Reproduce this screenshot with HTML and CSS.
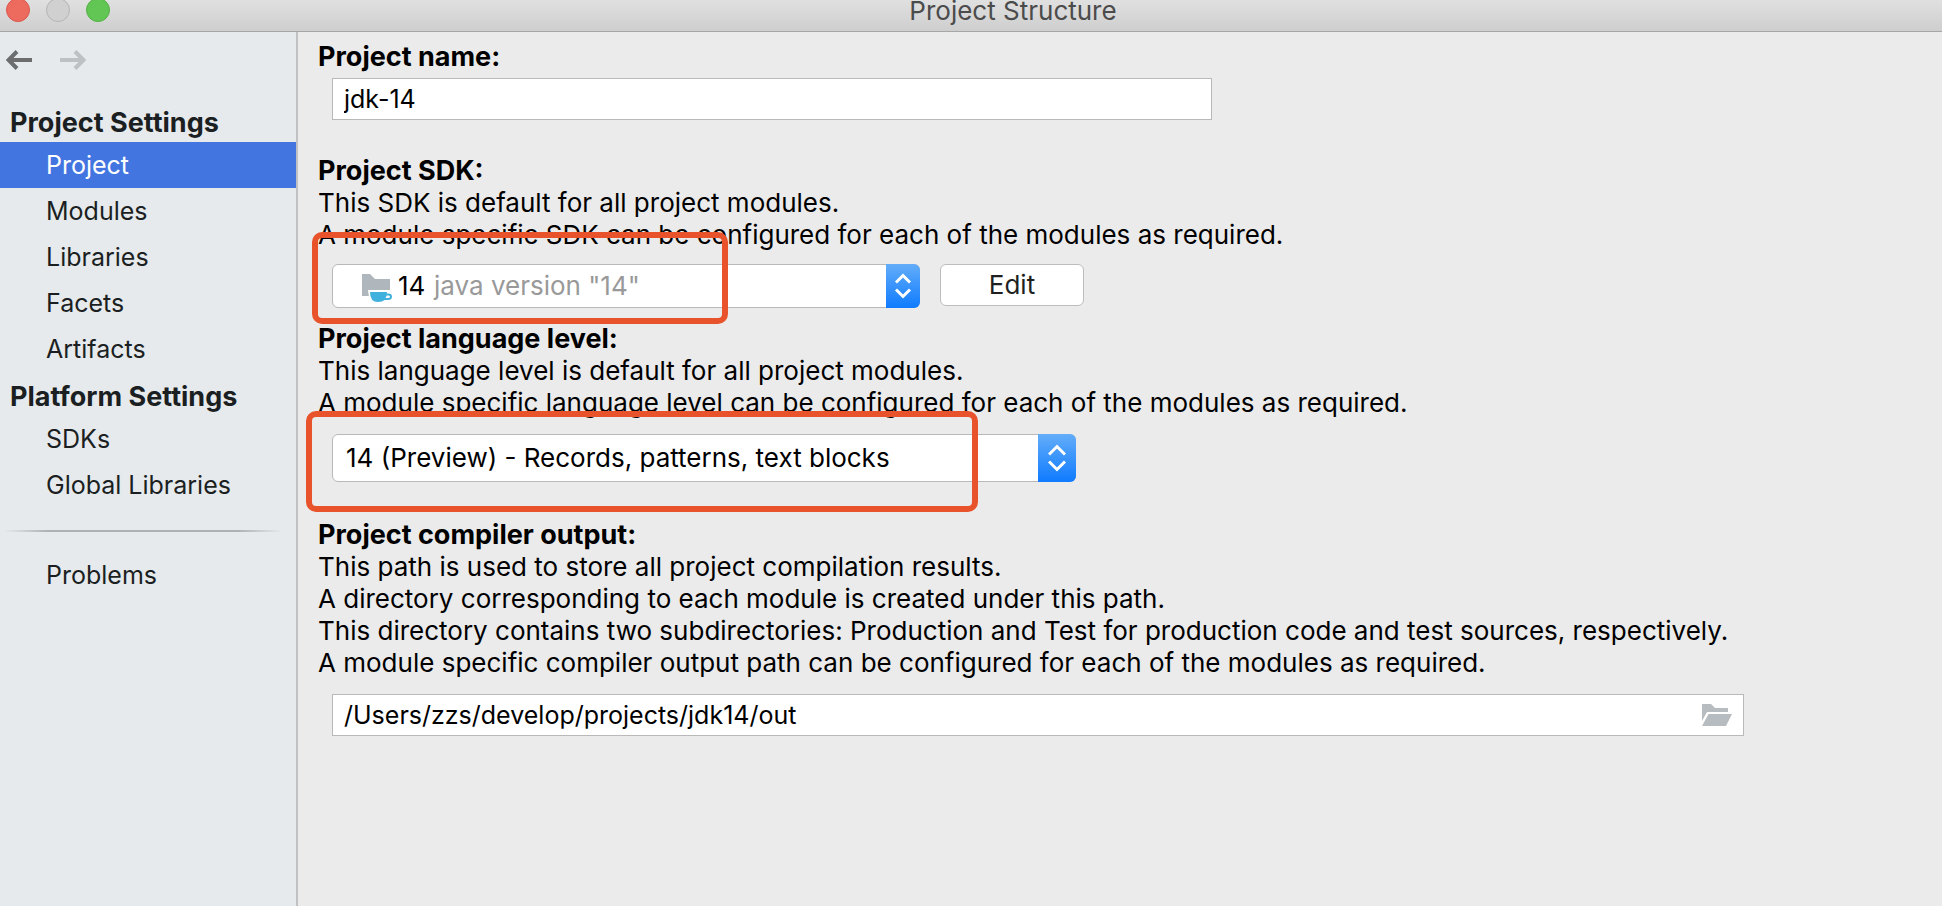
FILE: index.html
```html
<!DOCTYPE html>
<html lang="en">
<head>
    <meta charset="UTF-8">
    <meta name="viewport" content="width=device-width, initial-scale=1.0">
    <title>Project Structure</title>
    <link rel="stylesheet" href="styles.css">
</head>
<body>

    <header class="titlebar">
        <div class="lights">
            <button class="light close" aria-label="Close"></button>
            <button class="light minimize" aria-label="Minimize" disabled></button>
            <button class="light maximize" aria-label="Maximize"></button>
        </div>
        <h1>Project Structure</h1>
    </header>

    <div class="window">
        <aside class="sidebar">
            <div class="history">
                <button aria-label="Back">
                    <svg width="28" height="20" viewBox="0 0 28 20"><path d="M26 10H3M11 1.5L2.5 10L11 18.5" fill="none" stroke="#6b6d6f" stroke-width="4"/></svg>
                </button>
                <button aria-label="Forward" disabled>
                    <svg width="28" height="20" viewBox="0 0 28 20"><path d="M0 10H23M15 1.5L23.5 10L15 18.5" fill="none" stroke="#bec1c3" stroke-width="4"/></svg>
                </button>
            </div>
            <nav>
                <h2>Project Settings</h2>
                <a href="#" class="active">Project</a>
                <a href="#">Modules</a>
                <a href="#">Libraries</a>
                <a href="#">Facets</a>
                <a href="#">Artifacts</a>
                <h2>Platform Settings</h2>
                <a href="#">SDKs</a>
                <a href="#">Global Libraries</a>
                <hr>
                <a href="#">Problems</a>
            </nav>
        </aside>

        <main>
            <section class="name">
                <label for="projectName">Project name:</label>
                <div class="row">
                    <input type="text" id="projectName" value="jdk-14">
                </div>
            </section>

            <section class="sdk">
                <label for="projectSdk">Project SDK:</label>
                <p>This SDK is default for all project modules.</p>
                <p>A module specific SDK can be configured for each of the modules as required.</p>
                <div class="row">
                    <div class="combo sdk-combo">
                        <select id="projectSdk">
                            <option>14</option>
                        </select>
                        <svg class="sdk-icon" width="32" height="30" viewBox="0 0 32 30">
                            <path d="M0 0H8L13 5H28V22H0Z" fill="#afb7bc"/>
                            <path d="M6 16H28V23H7Z" fill="#fff"/>
                            <path d="M8 18H25Q25 28 16 28Q8 28 8 18Z" fill="#40b0dc"/>
                            <path d="M23 20.500H26Q29 20.500 29 22.500Q29 25 26 25H22" fill="none" stroke="#40b0dc" stroke-width="2"/>
                        </svg>
                        <span class="hint">java version "14"</span>
                        <span class="arrows">
                            <svg width="18" height="26" viewBox="0 0 18 26"><path d="M2 9.500L9 2.500L16 9.500M2 16.500L9 23.500L16 16.500"/></svg>
                        </span>
                    </div>
                    <button class="edit">Edit</button>
                </div>
                <div class="mark"></div>
            </section>

            <section class="level">
                <label for="languageLevel">Project language level:</label>
                <p>This language level is default for all project modules.</p>
                <p>A module specific language level can be configured for each of the modules as required.</p>
                <div class="row">
                    <div class="combo level-combo">
                        <select id="languageLevel">
                            <option>14 (Preview) - Records, patterns, text blocks</option>
                        </select>
                        <span class="arrows">
                            <svg width="18" height="28" viewBox="0 0 18 28"><path d="M1 10.500L9 2.500L17 10.500M1 17.500L9 25.500L17 17.500"/></svg>
                        </span>
                    </div>
                </div>
                <div class="mark"></div>
            </section>

            <section class="output">
                <label for="compilerOutput">Project compiler output:</label>
                <p>This path is used to store all project compilation results.</p>
                <p>A directory corresponding to each module is created under this path.</p>
                <p>This directory contains two subdirectories: Production and Test for production code and test sources, respectively.</p>
                <p>A module specific compiler output path can be configured for each of the modules as required.</p>
                <div class="row">
                    <div class="path">
                        <input type="text" id="compilerOutput" value="/Users/zzs/develop/projects/jdk14/out">
                        <button class="browse" aria-label="Browse">
                            <svg width="30" height="22" viewBox="0 0 30 22">
                                <path d="M0 0H9L13 4H26V8H5L0 17Z" fill="#b6bcc0"/>
                                <path d="M6.500 10H30L24 22H0Z" fill="#b6bcc0"/>
                            </svg>
                        </button>
                    </div>
                </div>
            </section>
        </main>
    </div>

</body>
</html>
```
FILE: styles.css
```css
* {
    box-sizing: border-box;
}

body {
    display: flex;
    flex-direction: column;
    min-height: 100vh;
    margin: 0;
    background-color: #ebebeb;
    color: #000000;
    font-family: Inter, "Liberation Sans", sans-serif;
    font-size: 26px;
    line-height: 32px;
}

button, input, select {
    margin: 0;
    padding: 0;
    border: none;
    color: inherit;
    font: inherit;
}

h1, h2, p {
    margin: 0;
    font-size: inherit;
}

svg {
    display: block;
}

/* Title bar */
.titlebar {
    display: grid;
    grid-template-columns: 1fr auto 1fr;
    height: 32px;
    border-bottom: 1px solid #a6a6a6;
    background: linear-gradient(#e0e0e0, #cecece);
}

.titlebar h1 {
    padding-left: 84px;
    line-height: 22px;
    font-weight: 400;
    color: #4b4b4b;
}

.lights {
    display: flex;
    gap: 16px;
    padding-left: 6px;
    margin-top: -2px;
}

.light {
    width: 24px;
    height: 24px;
    border: 1px solid #d9584d;
    border-radius: 50%;
    background-color: #ec6a5e;
}

.minimize {
    border-color: #b5b5b5;
    background-color: #d0d0d0;
}

.maximize {
    border-color: #55b046;
    background-color: #62c655;
}

.window {
    display: flex;
    flex: 1;
}

/* Sidebar */
.sidebar {
    flex: none;
    width: 298px;
    border-right: 2px solid #bfc1c2;
    background-color: #e6eaed;
    color: #1b1f22;
}

.history {
    display: flex;
    gap: 26px;
    padding: 18px 6px 34px;
}

.history button {
    background: none;
}

.sidebar h2 {
    padding-left: 10px;
    font-size: 27px;
    line-height: 38px;
}

.sidebar a {
    display: block;
    padding-left: 46px;
    font-size: 25px;
    line-height: 46px;
    color: inherit;
    text-decoration: none;
}

.sidebar a + h2 {
    margin-top: 6px;
}

.sidebar .active {
    background-color: #4375e1;
    color: #ffffff;
}

.sidebar hr {
    height: 2px;
    margin: 22px 14px 20px 4px;
    border: none;
    background: linear-gradient(to right, transparent, #adb1b4 16%, #adb1b4 84%, transparent);
}

/* Settings form */
main {
    flex: 1;
    padding: 9px 20px;
}

section {
    position: relative;
}

section label {
    display: block;
    font-size: 27px;
    font-weight: 700;
}

.row {
    display: flex;
    gap: 20px;
    padding-left: 14px;
    margin-top: 15px;
}

input {
    width: 100%;
    height: 42px;
    padding: 0 11px;
    border: 1px solid #b9b9b9;
    background-color: #ffffff;
    font-size: 25px;
}

.name input {
    max-width: 880px;
}

.name .row {
    margin-top: 5px;
}

.sdk {
    margin-top: 35px;
}

.sdk .row {
    margin-top: 13px;
}

.level {
    margin-top: 15px;
}

.output {
    margin-top: 37px;
}

.combo {
    position: relative;
    width: 100%;
    height: 44px;
}

.combo select {
    width: 100%;
    height: 100%;
    padding: 0 50px 0 13px;
    border: 1px solid #b9b9b9;
    border-radius: 6px;
    background-color: #ffffff;
    appearance: none;
}

.sdk-combo {
    max-width: 588px;
}

.sdk-combo select {
    padding-left: 65px;
}

.level-combo {
    max-width: 744px;
    height: 48px;
}

.sdk-icon {
    position: absolute;
    top: 10px;
    left: 30px;
    pointer-events: none;
}

.hint {
    position: absolute;
    top: 6px;
    left: 102px;
    color: #999999;
    pointer-events: none;
}

.arrows {
    position: absolute;
    top: 0;
    right: 0;
    bottom: 0;
    display: flex;
    align-items: center;
    justify-content: center;
    width: 34px;
    border-radius: 0 6px 6px 0;
    background: linear-gradient(#63adf9, #0f7bff);
    pointer-events: none;
}

.level-combo .arrows {
    width: 38px;
}

.arrows path {
    fill: none;
    stroke: #ffffff;
    stroke-width: 3;
}

.edit {
    flex: none;
    width: 144px;
    height: 42px;
    border: 1px solid #bdbdbd;
    border-radius: 6px;
    background-color: #ffffff;
    color: #1f1f1f;
}

.path {
    position: relative;
    width: 100%;
    max-width: 1412px;
}

.browse {
    position: absolute;
    top: 10px;
    right: 12px;
    background: none;
}

/* Highlight frames */
.mark {
    position: absolute;
    border: 6px solid #e8532b;
    border-radius: 10px;
    pointer-events: none;
}

.sdk .mark {
    top: 77px;
    left: -6px;
    width: 416px;
    height: 92px;
}

.level .mark {
    top: 88px;
    left: -12px;
    width: 672px;
    height: 101px;
}
```
